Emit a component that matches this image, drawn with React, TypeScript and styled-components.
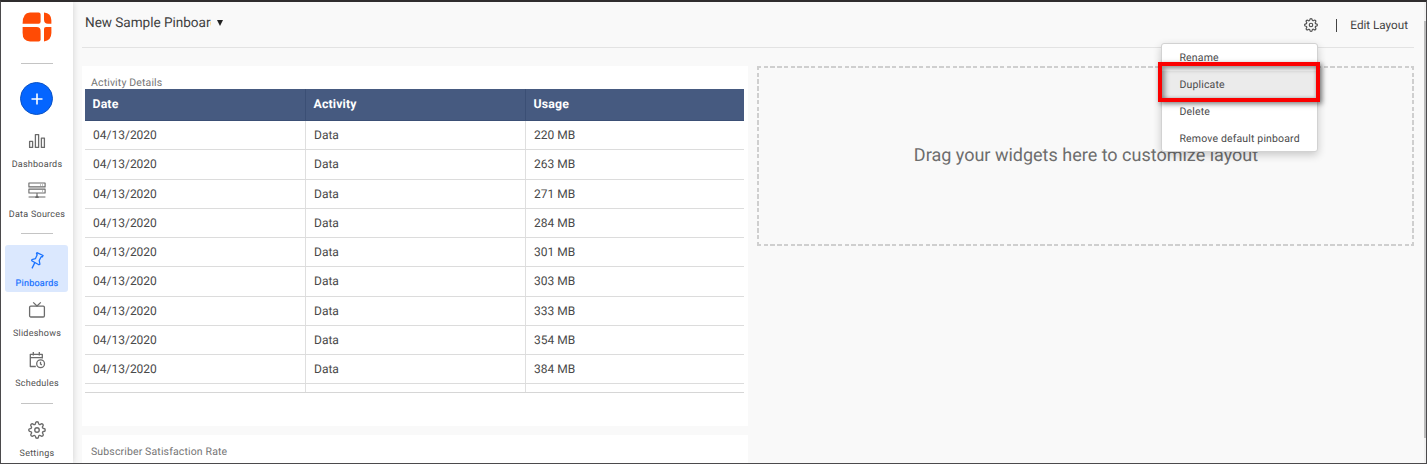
import React from "react";
import styled, { createGlobalStyle, css } from "styled-components";
import { FiSettings } from "react-icons/fi";

const GlobalStyle = createGlobalStyle`
  *, *::before, *::after { box-sizing: border-box; }
  body { margin: 0; background: #f9f9f9; font-family: Roboto, "Liberation Sans", sans-serif; color: #4a4a4a; text-rendering: geometricPrecision; }
`;

const Frame = styled.div`
  display: flex;
  width: 1427px;
  height: 464px;
  overflow: hidden;
  background: #f9f9f9;
  border: 1px solid #4b4a4c;
  border-top: 2px solid #2f2d2e;
`;

const Sidebar = styled.nav`
  flex: none;
  width: 72px;
  padding-right: 1px;
  display: flex;
  flex-direction: column;
  align-items: center;
  background: #fff;
  box-shadow: 0 0 7px rgba(0, 0, 0, 0.17);
`;

const LogoBox = styled.div`
  height: 61px;
  flex: none;
  padding-top: 10px;
  svg { display: block; }
`;

const Divider = styled.hr<{ $after: number }>`
  flex: none;
  width: 32px;
  height: 1px;
  border: 0;
  margin: 0 0 ${(p) => p.$after}px;
  background: #c4c4c4;
`;

const AddButton = styled.button`
  flex: none;
  display: flex;
  align-items: center;
  justify-content: center;
  width: 33px;
  height: 33px;
  margin-bottom: 11px;
  padding: 0;
  border: 1.5px solid #0a52c4;
  border-radius: 50%;
  background: #0465ff;
`;

const NavItem = styled.a<{ $active?: boolean; $gap?: number }>`
  flex: none;
  display: flex;
  flex-direction: column;
  align-items: center;
  width: 63px;
  height: 47px;
  margin-bottom: ${(p) => p.$gap ?? 3.5}px;
  padding-top: 5.5px;
  border-radius: 3px;
  color: #6b6b6b;
  ${(p) => p.$active && css`
    background: #dbe8fe;
    color: #1a73ff;
  `}
  svg { display: block; flex: none; }
`;

const NavLabel = styled.span<{ $active?: boolean }>`
  margin: 9px 0 0 1px;
  font-size: 9px;
  line-height: 12px;
  letter-spacing: 0.25px;
  white-space: nowrap;
  color: ${(p) => (p.$active ? "#1a73ff" : "#4f4f4f")};
  -webkit-text-stroke: ${(p) => (p.$active ? "0.2px" : "0")};
`;

const Main = styled.main`
  flex: 1;
  min-width: 0;
  padding: 0 10px 0 9px;
`;

const TopBar = styled.header`
  display: flex;
  justify-content: space-between;
  height: 46px;
  border-bottom: 1px solid #e3e3e3;
  padding: 0 6px 0 3px;
`;

const Title = styled.div`
  display: flex;
  height: 41px;
  align-items: center;
  font-size: 13.6px;
  letter-spacing: -0.04px;
  color: #3f3f3f;
`;

const TitleText = styled.span`
  width: 125.5px;
  overflow: hidden;
  white-space: nowrap;
`;

const Caret = styled.span`
  width: 0;
  height: 0;
  margin: 0 0 0 6.5px;
  border-left: 3.5px solid transparent;
  border-right: 3.5px solid transparent;
  border-top: 6.5px solid #222;
`;

const Actions = styled.div`
  display: flex;
  align-items: center;
  height: 46px;
  font-size: 11.7px;
  color: #444;
  svg { display: block; color: #4f4f4f; }
`;

const Separator = styled.span`
  width: 1px;
  height: 13px;
  margin: 0 13px 0 18px;
  background: #444;
`;

const Columns = styled.div`
  display: flex;
  gap: 9px;
  margin-top: 18px;
`;

const Widgets = styled.div`
  display: flex;
  flex: none;
  flex-direction: column;
  gap: 9px;
  width: 666px;
`;

const Panel = styled.section<{ $height: number }>`
  height: ${(p) => p.$height}px;
  padding: 10px 4px 0 3px;
  background: #fff;
`;

const PanelTitle = styled.h2`
  margin: 0 0 0 6px;
  height: 13px;
  font-size: 10.5px;
  line-height: 14px;
  font-weight: 400;
  letter-spacing: 0.14px;
  color: #757575;
`;

const TableClip = styled.div`
  height: 304px;
  overflow: hidden;
  border-bottom: 1px solid #d6d6d6;
`;

const Row = styled.div<{ $head?: boolean }>`
  display: grid;
  grid-template-columns: 220px 220px 1fr;
  height: ${(p) => (p.$head ? "32px" : "29.25px")};
  border-bottom: ${(p) => (p.$head ? "1px solid #3b4f75" : "1px solid #dcdcdc")};
  background: ${(p) => (p.$head ? "#465a80" : "#fff")};
`;

const Cell = styled.div<{ $head?: boolean }>`
  display: flex;
  align-items: center;
  padding-left: 8px;
  font-size: 12px;
  color: #494949;
  &:not(:first-child) { border-left: 1px solid ${(p) => (p.$head ? "#3b4f75" : "#dfdfdf")}; }
  ${(p) => p.$head && css`
    padding-left: 7.5px;
    font-size: 12.3px;
    font-weight: 700;
    letter-spacing: 0.15px;
    color: #fff;
  `}
`;

const line = "#cfcfcf";
const DropZone = styled.div`
  display: flex;
  flex: none;
  align-items: center;
  justify-content: center;
  width: 657px;
  height: 180px;
  padding: 0 0 2px 1px;
  font-size: 18px;
  color: #6d6d6d;
  background:
    repeating-linear-gradient(90deg, ${line} 0 4.5px, transparent 4.5px 6.745px) 0 0 / 100% 2px no-repeat,
    repeating-linear-gradient(90deg, ${line} 0 4.5px, transparent 4.5px 6.745px) 0 100% / 100% 2px no-repeat,
    repeating-linear-gradient(180deg, ${line} 0 4.5px, transparent 4.5px 6.75px) 0 0 / 2px 100% no-repeat,
    repeating-linear-gradient(180deg, ${line} 0 4.5px, transparent 4.5px 6.75px) 100% 0 / 2px 100% no-repeat;
`;

const Menu = styled.div`
  position: absolute;
  left: 1161px;
  top: 43px;
  width: 157px;
  height: 109px;
  border: 1px solid #d2d2d2;
  border-radius: 3px;
  background: #fff;
  box-shadow: 0 3px 8px rgba(0, 0, 0, 0.2);
`;

const MenuItem = styled.div<{ $hover?: boolean }>`
  height: 27px;
  padding-left: 17.5px;
  font-size: 10.5px;
  line-height: 27px;
  letter-spacing: 0.15px;
  white-space: nowrap;
  color: #4a4a4a;
  background: ${(p) => (p.$hover ? "#ebebeb" : "transparent")};
`;

const Callout = styled.div`
  position: absolute;
  left: -4px;
  top: 18px;
  width: 162px;
  height: 40px;
  border: 4px solid #fb0000;
  box-shadow: 2px 2px 5px rgba(0, 0, 0, 0.5), inset 3px 3px 5px rgba(0, 0, 0, 0.4), inset -1px -1px 3px rgba(0, 0, 0, 0.15);
`;

const ScrollTrack = styled.div`
  flex: none;
  width: 2px;
  padding-top: 19px;
  background: #f0f0f0;
`;

const ScrollThumb = styled.div`
  height: 417px;
  background: #bcbcbc;
`;

const Stroke = ({ size = 18, sw = 1.3, children }: { size?: number; sw?: number; children: React.ReactNode }) => (
  <svg width={size} height={size} viewBox="0 0 18 18" fill="none" stroke="currentColor" strokeWidth={sw} strokeLinejoin="round">
    {children}
  </svg>
);

const BarsIcon = () => (
  <Stroke>
    <path d="M1.6 9.4h3v6h-3zM7.4 2.6h3.2v12.8H7.4zM13.4 6.1h3v9.3h-3z" />
  </Stroke>
);

const DataIcon = () => (
  <Stroke sw={1.1}>
    <path d="M.9 1h16.2v3.9H.9zM.9 7.1h16.2v3.9H.9zM9 11v3.3M.6 15h16.8" />
    <path d="M12 2.95h.8M14 2.95h.8M14 9.05h.8" />
    <path d="M7.3 16v-1.2L9 13.2l1.7 1.6v1.2z" fill="currentColor" stroke="none" />
  </Stroke>
);

const PinIcon = () => (
  <Stroke>
    <path d="M8.9 1.6l6.2 2.9-.8 1.3-1.1-.1-2 3.8.7 3.6-1 .7-7.2-4.1.2-1.1 3.6-1 1.7-3.8-.7-1.1zM6.7 11.9L4 17.4" />
  </Stroke>
);

const TvIcon = () => (
  <Stroke>
    <rect x="1.6" y="5.1" width="14.8" height="10.9" rx="1.2" />
    <path d="M5.2 1.4L9 5l3.8-3.6" />
  </Stroke>
);

const CalendarIcon = () => (
  <Stroke>
    <path d="M7.8 15.5H2.3V3.3h12v4.3M2.3 6.6h12M5.3 1v3.6M11.3 1v3.6" />
    <circle cx="12.6" cy="12.8" r="3.9" />
    <path d="M12.5 10.7v2.3l1.3.9" />
  </Stroke>
);

const Logo = () => (
  <svg width="30" height="30" viewBox="0 0 30 30" fill="#ff4b05">
    <path d="M8 .5h8.6q2 0 2 2v7.3q0 2-2 2H.6Q.5.5 8 .5z" />
    <path d="M.6 15H14.6q4 0 4 4v8.4q0 2-2 2H8Q.6 29.4.6 21z" />
    <path d="M22 .6q7.3.7 7.4 8v3.2H26q-4 0-4-4z" />
    <path d="M29.4 15v6q-.2 7.7-7.4 8.4V17q0-2 2-2z" />
  </svg>
);

const usage = [220, 263, 271, 284, 301, 303, 333, 354, 384];

export default function App() {
  return (
    <>
      <GlobalStyle />
      <Frame>
        <Sidebar>
          <LogoBox><Logo /></LogoBox>
          <Divider $after={18} />
          <AddButton aria-label="Add">
            <svg width="12" height="12" viewBox="0 0 12 12" stroke="#fff" strokeWidth="1.6">
              <path d="M6 .5v11M.5 6h11" />
            </svg>
          </AddButton>
          <NavItem><BarsIcon /><NavLabel>Dashboards</NavLabel></NavItem>
          <NavItem $gap={9.5}><DataIcon /><NavLabel>Data Sources</NavLabel></NavItem>
          <Divider $after={11} />
          <NavItem $active><PinIcon /><NavLabel $active>Pinboards</NavLabel></NavItem>
          <NavItem $gap={3}><TvIcon /><NavLabel>Slideshows</NavLabel></NavItem>
          <NavItem $gap={10.5}><CalendarIcon /><NavLabel>Schedules</NavLabel></NavItem>
          <Divider $after={11} />
          <NavItem><FiSettings size={18} strokeWidth={1.8} /><NavLabel>Settings</NavLabel></NavItem>
        </Sidebar>
        <Main>
          <TopBar>
            <Title><TitleText>New Sample Pinboard</TitleText><Caret /></Title>
            <Actions><FiSettings size={14} strokeWidth={2} /><Separator />Edit Layout</Actions>
          </TopBar>
          <Columns>
            <Widgets>
              <Panel $height={360}>
                <PanelTitle>Activity Details</PanelTitle>
                <TableClip>
                  <Row $head>
                    <Cell $head>Date</Cell><Cell $head>Activity</Cell><Cell $head>Usage</Cell>
                  </Row>
                  {usage.map((mb) => (
                    <Row key={mb}><Cell>04/13/2020</Cell><Cell>Data</Cell><Cell>{mb} MB</Cell></Row>
                  ))}
                  <Row><Cell /><Cell /><Cell /></Row>
                </TableClip>
              </Panel>
              <Panel $height={60}><PanelTitle>Subscriber Satisfaction Rate</PanelTitle></Panel>
            </Widgets>
            <DropZone>Drag your widgets here to customize layout</DropZone>
          </Columns>
        </Main>
        <ScrollTrack><ScrollThumb /></ScrollTrack>
      </Frame>
      <Menu>
        <MenuItem>Rename</MenuItem>
        <MenuItem $hover>Duplicate</MenuItem>
        <MenuItem>Delete</MenuItem>
        <MenuItem>Remove default pinboard</MenuItem>
        <Callout />
      </Menu>
    </>
  );
}
